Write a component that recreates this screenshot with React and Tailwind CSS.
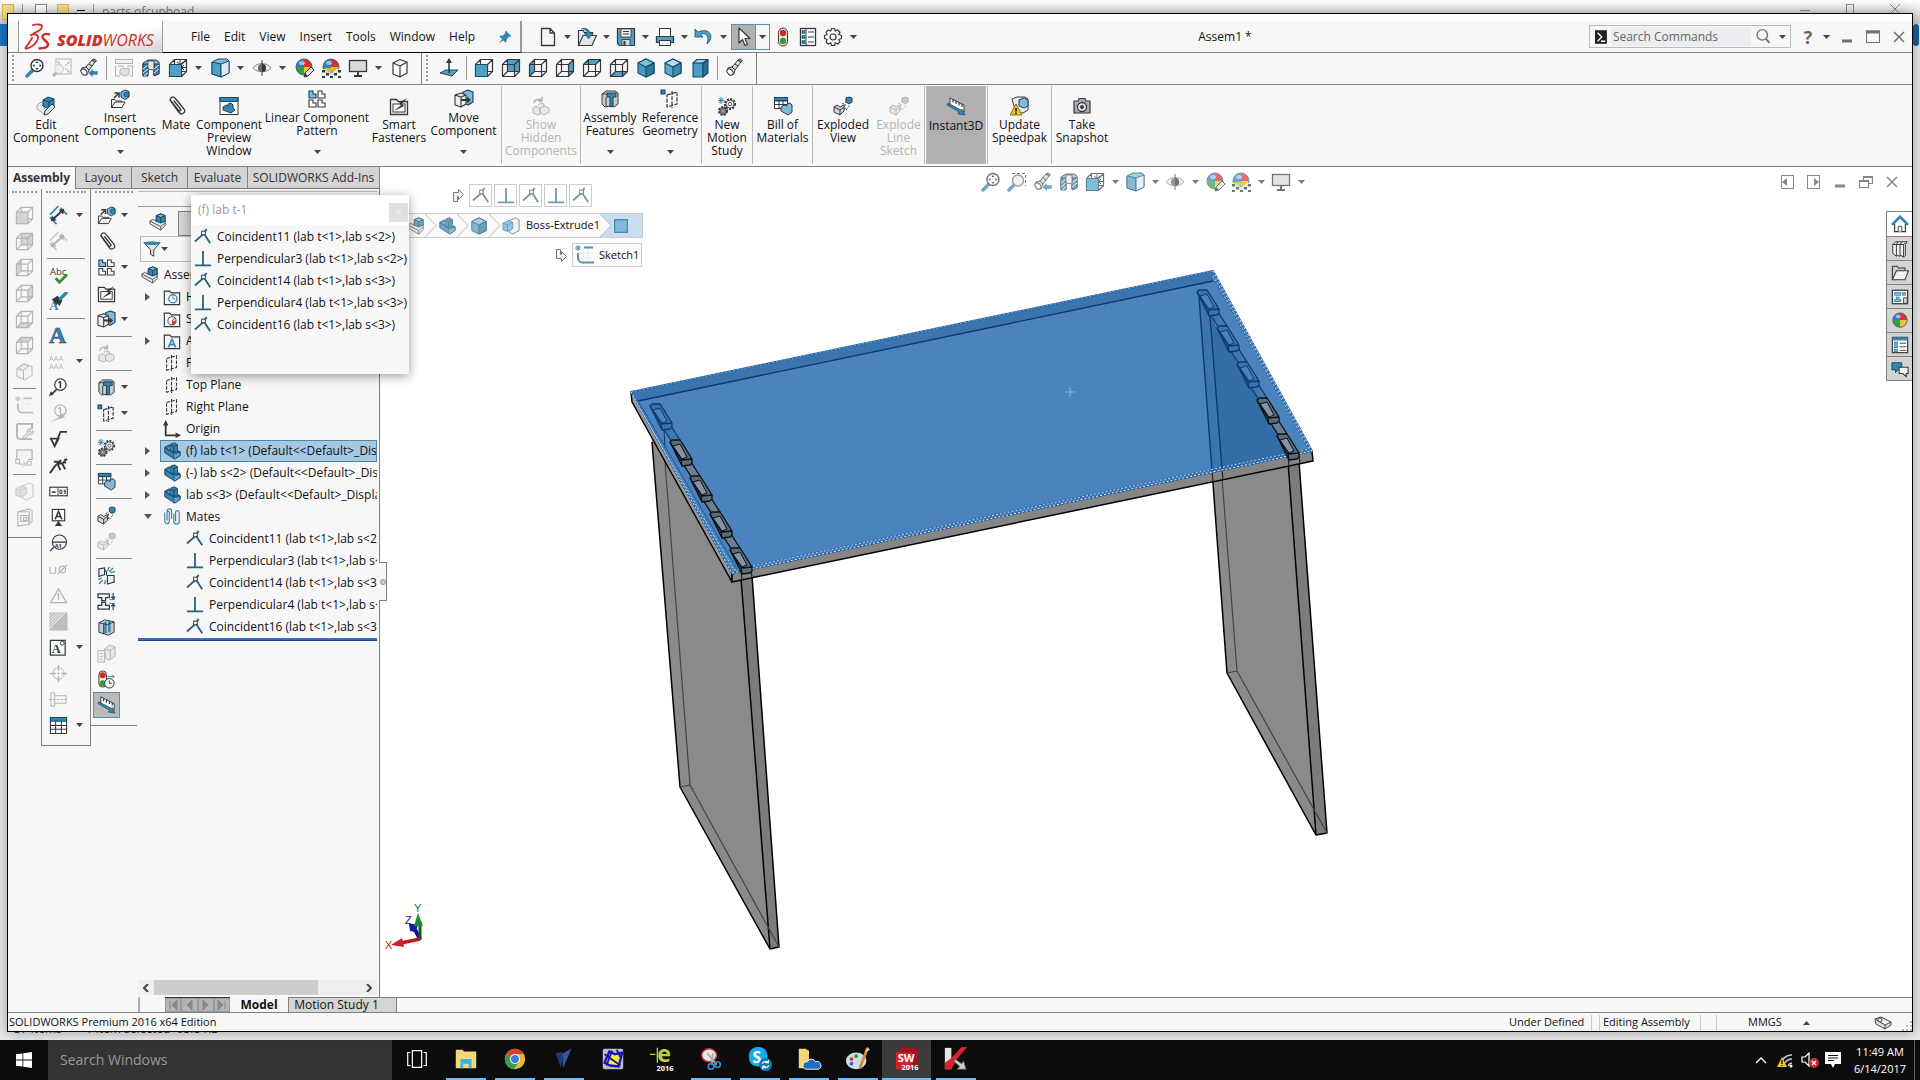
import React from "react";

const K = "#34383c";
const B = "#3585af";
const L = "#7fbcdc";
const F = "#4f9fc6";

const ball = (
  <>
    <path d="M10 9V1A8 8 0 0 0 2 9Z" fill="#3b76d6" />
    <path d="M10 9V1A8 8 0 0 1 18 9Z" fill="#d8302a" />
    <path d="M10 9V17A8 8 0 0 1 2 9Z" fill="#2fa33c" />
    <path d="M10 9V17A8 8 0 0 0 18 9Z" fill="#e8c33a" />
    <circle cx="10" cy="9" r="8" fill="none" stroke="#55606a" strokeWidth="1" />
    <ellipse cx="8" cy="5" rx="3" ry="2" fill="#fff" opacity="0.5" />
  </>
);

const wire = <path d="M1.500 6.500H13.500V18.500H1.500ZM6.500 1.500H18.500V13.500H6.500ZM1.500 6.500L6.500 1.500M13.500 6.500L18.500 1.500M1.500 18.500L6.500 13.500M13.500 18.500L18.500 13.500" fill="none" stroke={K} strokeWidth="1.200" />;
const partBlue = (
  <g stroke="#12405a" strokeWidth="1" strokeLinejoin="round">
    <path d="M2 6L7 3L9 4V2L13 1L16 3V9L19 11V15L13 19L2 12Z" fill={B} />
    <path d="M2 6L7 9L12 12V18L13 19L19 15V11L14 13L8 9V5Z" fill={L} opacity="0.600" />
    <path d="M9 4L12 5L16 3M12 5V11L19 11M2 6L12 12.500" fill="none" />
  </g>
);
const asm = (
  <g strokeLinejoin="round" strokeWidth="1.100">
    <path d="M1 9L4 7L8 9V6L14 10L18 8V14L13 19L1 12Z" fill="#e4e6e8" stroke="#55595d" />
    <path d="M1 9L13 15V19M13 15L18 11" fill="none" stroke="#55595d" />
    <path d="M8 3L13 1L18 3V9L13 11L8 9Z" fill={B} stroke="#12405a" />
    <path d="M8 3L13 5L18 3L13 1Z" fill={L} stroke="#12405a" />
    <path d="M13 5V11" stroke="#12405a" />
  </g>
);
const planeShape = <path d="M4 5L15 2V15L4 18ZM9.500 1V19" fill="none" stroke={K} strokeWidth="1.200" strokeDasharray="4 1.500" />;
const folder = <path d="M1.500 18.500V3.500H7.500L9.500 5.500H18.500V18.500Z" fill="#f3f3f3" stroke={K} strokeWidth="1.300" />;
const gear = (x, y, r, f) => (
  <g>
    <circle cx={x} cy={y} r={r} fill={f} stroke={K} strokeWidth="2" strokeDasharray="2 1.300" />
    <circle cx={x} cy={y} r={r - 1} fill={f} stroke={K} strokeWidth="0.800" />
    <circle cx={x} cy={y} r={r / 3} fill="#fff" stroke={K} strokeWidth="0.800" />
  </g>
);
const cubeSolid = (a, b, c) => (
  <g stroke="#174a66" strokeWidth="1.100" strokeLinejoin="round">
    <path d="M10 1L18 5V15L10 19L2 15V5Z" fill={a} />
    <path d="M10 1L18 5L10 9L2 5Z" fill={b} />
    <path d="M10 9L18 5V15L10 19Z" fill={c} />
  </g>
);
const boxSolid = (a, b, c) => (
  <g stroke="#174a66" strokeWidth="1.100" strokeLinejoin="round">
    <path d="M3 5H13V19H3Z" fill={a} />
    <path d="M3 5L7 1.500H18L13 5Z" fill={b} />
    <path d="M13 5L18 1.500V15L13 19Z" fill={c} />
  </g>
);
const flash = (
  <g stroke={K} strokeWidth="1" strokeLinejoin="round">
    <path d="M2 13L5 17L9 16L10 12L16 4L13 2L7 9L3 10Z" fill="#d6d8da" />
    <path d="M13 2L15 0.800L17.500 2.800L16 4Z" fill="#9ea2a6" />
    <ellipse cx="5" cy="14" rx="3.600" ry="2.500" transform="rotate(50 5 14)" fill="#fff" />
    <path d="M7 9L10 12M10 6L13 8" fill="none" />
  </g>
);
const check = (
  <g fill={K}>
    {[[1, 12], [9, 12], [5, 15], [13, 15], [1, 18], [9, 18], [17, 12], [17, 18]].map(([x, y], i) => (
      <rect key={i} x={x} y={y} width="3" height="2.500" />
    ))}
  </g>
);
const ruler = (
  <>
    <path d="M4 1L18 8V15L4 8Z" fill="#fff" stroke={K} strokeWidth="1" />
    <path d="M7 2.500V5.500M10 4V7M13 5.500V8.500M16 7V10" stroke={K} strokeWidth="1.200" />
    <path d="M1 8L13 15L12 17L19 18L16 12L15 13L2 6Z" fill={B} stroke="#12405a" strokeWidth="0.600" />
  </>
);
const move = (
  <g strokeWidth="1.100" strokeLinejoin="round">
    <path d="M9 3L14 1L19 3V13L14 16L9 14Z" fill={L} stroke="#12405a" />
    <path d="M1 6L7 4L12 6V15L7 18L1 16Z" fill="#ececec" stroke={K} />
    <path d="M1 6L7 8L12 6M7 8V18" fill="none" stroke={K} />
    <path d="M7 10H13V7.500L17 11L13 14.500V12H7Z" fill={K} stroke="none" />
  </g>
);
const exploded = (
  <g strokeLinejoin="round">
    <path d="M1 11L4 9L7 11L11 9V15L7 19L1 16Z" fill="#d2d4d6" stroke={K} />
    <path d="M1 11L7 14V19M7 14L11 11" fill="none" stroke={K} />
    <path d="M13 2L16 1L19 2V6L16 8L13 6Z" fill={B} stroke="#12405a" />
    <path d="M12 8V14M9 8L13 6M13 14L17 9" fill="none" stroke={K} strokeDasharray="2 1.500" />
  </g>
);
const feat = (
  <g strokeLinejoin="round">
    <path d="M2 5L6 2H15L18 4V15L14 18L10 17L5 18L2 15Z" fill="#c9cccf" stroke={K} />
    <path d="M7 4H16V8H13V17L10 18V8H7Z" fill={B} stroke="#12405a" />
    <path d="M2 5H7M6 8V17" stroke={K} fill="none" />
  </g>
);
const refgeo = (
  <>
    <rect x="1" y="1" width="4" height="4" fill={B} stroke="#12405a" />
    <path d="M7 6L17 3V15L7 18ZM12 2V19" fill="none" stroke={K} strokeWidth="1.200" strokeDasharray="4 1.300" />
  </>
);
const mating = (
  <path d="M4 4L13 16.500A3 3 0 0 0 18 13L9 2A2.500 2.500 0 0 0 5 5L12.500 14.500A1 1 0 0 0 14.500 13L8 5" fill="none" stroke={K} strokeWidth="1.300" strokeLinecap="round" />
);
const mini = (x, y, f, s) => <path key={x + "-" + y} d={`M${x} ${y}h4v3h3v4h-7z`} fill={f} stroke={s} strokeWidth="1.100" />;
const cutaway = (
  <g strokeLinejoin="round">
    <path d="M2 5L7 2H15L18 4V15L13 17V8L7 8V17L2 18Z" fill={L} stroke={K} />
    <path d="M2 6H7V18H2ZM13 6H18V16L13 18Z" fill={B} stroke={K} />
    <path d="M2 11L7 7M2 15L7 11M3 18L7 15M13 11L18 7M13 15L18 11" stroke="#fff" strokeWidth="0.900" />
    <path d="M7 3H13V12L7 11Z" fill="#e8ecef" stroke={K} strokeWidth="0.800" />
  </g>
);
const traffic = (
  <>
    <rect x="5.500" y="1" width="9" height="18" rx="4.500" fill="#e9e9e9" stroke={K} />
    <circle cx="10" cy="6" r="3.200" fill="#d02b1e" />
    <circle cx="10" cy="14" r="3.200" fill="#3d9a2a" />
  </>
);

const ICONS = {
  zoomFit: (
    <>
      <path d="M2 18L8 12" stroke={B} strokeWidth="3.500" strokeLinecap="round" />
      <circle cx="12" cy="7.500" r="6" fill="#f4f7f9" stroke={K} strokeWidth="1.400" />
      <path d="M12 3L13.500 5H10.500ZM12 12L13.500 10H10.500ZM7.500 7.500L9.500 6V9ZM16.500 7.500L14.500 6V9Z" fill={K} />
    </>
  ),
  zoomArea: (
    <>
      <path d="M2 18L7 13" stroke={B} strokeWidth="3.500" strokeLinecap="round" />
      <path d="M5 1.500H18.500V14" fill="none" stroke={K} strokeDasharray="3 2" />
      <circle cx="11" cy="8.500" r="5.500" fill="#e9eef2" stroke="#777" strokeWidth="1.400" />
    </>
  ),
  zoomGrey: (
    <>
      <rect x="4" y="1" width="15" height="15" fill="none" stroke={K} />
      <path d="M8 5H6V3M15 5H17V3M15 13H17V15M10 8L6 4M13 8L17 4M13 10L17 14" stroke={K} fill="none" />
      <circle cx="7" cy="11" r="4.500" fill="#ddd" stroke="#777" />
      <path d="M1 18L4 15" stroke={K} strokeWidth="3" />
    </>
  ),
  prev: (
    <>
      {flash}
      <path d="M19 13H14V10.500L9 15L14 19.500V17H19Z" fill={B} stroke="#fff" strokeWidth="0.500" />
    </>
  ),
  flash,
  annot: (
    <g stroke={K} fill="#eee">
      <rect x="1.500" y="1.500" width="17" height="4" />
      <path d="M1.500 8V18H6M13 8H18.500V18H15M4 8H10" fill="none" />
      <path d="M6 12L9 10L12 11L15 10V16L11 18L6 16Z" fill="#bbb" />
    </g>
  ),
  cutaway,
  orient: (
    <>
      {wire}
      <rect x="1.500" y="6.500" width="12" height="12" fill={F} stroke="#174a66" />
      <path d="M12 1.500V6M9 4L12 6.500L15 4M18.500 9.500H14M16 7L13.500 9.500L16 12" fill="none" stroke={K} />
    </>
  ),
  display: (
    <g stroke="#174a66" strokeLinejoin="round">
      <path d="M2 4L8 1H17L19 3V15L11 19L2 16Z" fill={L} />
      <path d="M2 4L11 6V19L2 16Z" fill={F} />
      <path d="M11 6L19 3V15L11 19Z" fill="#d9ecf6" />
    </g>
  ),
  eye: (
    <>
      <path d="M1 10C5 4 15 4 19 10C15 15 5 15 1 10Z" fill="#ececec" stroke="#888" />
      <path d="M10 2V18" stroke={K} />
      <circle cx="10" cy="10" r="4" fill="#666a6e" />
      <path d="M10 6A4 4 0 0 1 10 14Z" fill={K} />
    </>
  ),
  ballEdit: (
    <>
      {ball}
      <path d="M10 19L11 15L17 9L20 12L14 18Z" fill="#cfe6f3" stroke={K} />
      <path d="M10 19L11 15L14 18Z" fill={K} />
    </>
  ),
  scene: (
    <>
      {ball}
      <path d="M1 11V19H19V11" fill="#fff" opacity="0.700" />
      {check}
      <path d="M4 10a6.500 6.500 0 0 0 12 0z" fill="#d9b33c" />
    </>
  ),
  ball,
  monitor: (
    <>
      <rect x="1.500" y="2.500" width="17" height="11" fill="#d8dadc" stroke={K} strokeWidth="1.300" />
      <path d="M10 14V17M6 18H14" stroke={K} strokeWidth="2" />
    </>
  ),
  cubeLine: <path d="M3 5L10 1.500L17 4V15L10 19L3 16ZM3 5L10 8L17 4M10 8V19" fill="#fff" stroke={K} strokeWidth="1.200" strokeLinejoin="round" />,
  normal: (
    <>
      <path d="M1 15L7 12H19L13 18Z" fill={F} stroke="#174a66" />
      <path d="M10 15V3" stroke={K} strokeWidth="1.600" />
      <path d="M10 0L13 5H7Z" fill={K} />
    </>
  ),
  cFront: <>{wire}<rect x="1.500" y="6.500" width="12" height="12" fill={F} stroke="#174a66" /></>,
  cBack: <><rect x="6.500" y="1.500" width="12" height="12" fill={F} />{wire}</>,
  cLeft: <><path d="M1.500 6.500L6.500 1.500V13.500L1.500 18.500Z" fill={F} />{wire}</>,
  cRight: <><path d="M13.500 6.500L18.500 1.500V13.500L13.500 18.500Z" fill={F} />{wire}</>,
  cTop: <><path d="M1.500 6.500L6.500 1.500H18.500L13.500 6.500Z" fill={F} />{wire}</>,
  cBottom: <><path d="M1.500 18.500L6.500 13.500H18.500L13.500 18.500Z" fill={F} />{wire}</>,
  iso: cubeSolid("#4a9cc4", "#7fc0e0", "#2a7aa3"),
  tri: cubeSolid("#5fa9cc", "#b5dced", "#3d8db5"),
  dim: boxSolid("#4a9cc4", "#9fd0e8", "#2a6f96"),
  editComp: (
    <>
      <path d="M1 9L5 6L8 8V12L12 15L8 18L1 13Z" fill="#e8e8e8" stroke="#a8a8a8" />
      <path d="M7 4L12 1L18 3V10L13 13L7 10Z" fill={B} stroke="#12405a" />
      <path d="M7 4L13 6L18 3M13 6V13" stroke="#12405a" fill="none" />
      <path d="M8 19L9 15L16 8L19 11L12 18Z" fill="#cfe6f3" stroke={K} />
    </>
  ),
  insert: (
    <>
      <path d="M1.500 18.500V10.500H5L6.500 12H12V13" fill="#eee" stroke={K} />
      <path d="M1.500 18.500L5 13H15L12 18.500Z" fill="#f2f2f2" stroke={K} />
      <path d="M4 9L8 5M4.500 4H9V8.500" stroke={K} strokeWidth="1.600" fill="none" />
      <path d="M11 3L15 1L19 2.500V8L15 10.500L11 8Z" fill={L} stroke="#12405a" />
      <path d="M14 4L17 3L19 4V7L16 8L14 7Z" fill={B} stroke="#12405a" strokeWidth="0.700" />
    </>
  ),
  mate: mating,
  preview: (
    <>
      <rect x="1" y="1.500" width="18" height="17" fill="#fff" stroke={K} />
      <rect x="1" y="1.500" width="18" height="4" fill={B} stroke="#174a66" />
      <path d="M4 11L7 9L9 10V8L12 7L14 9V12L16 14L12 17L4 14Z" fill={B} stroke="#12405a" />
    </>
  ),
  pattern: <>{[mini(2, 2, L, "#12405a"), mini(11, 2, "#fff", K), mini(2, 11, "#fff", K), mini(11, 11, "#fff", K)]}</>,
  smart: (
    <>
      {folder}
      <rect x="4" y="8" width="12" height="8" fill="#fff" stroke={K} />
      <path d="M18 2L10 7L12 9L5 15L15 10L13 8Z" fill={K} />
    </>
  ),
  move,
  hidden: (
    <>
      <path d="M7 9L10 7L13 8V11M2 12L5 10L9 12V18L7 19L2 17ZM9 12L13 10L18 12V16L13 19L9 17Z" fill="#ccc" stroke={K} />
      <path d="M3 7A5 4 0 0 1 11 4M11 1V5H7" fill="none" stroke={K} strokeWidth="1.500" />
    </>
  ),
  feat,
  refgeo,
  motion: (
    <>
      {gear(13, 8, 5, "#eee")}
      {gear(6, 15, 4, "#aaa")}
      <path d="M4 1V8M1 4.500H7.500M2 2L6.500 7M6.500 2L2 7" stroke={B} strokeWidth="1" />
    </>
  ),
  bom: (
    <>
      <path d="M1.500 1.500H14.500V12.500H1.500ZM1.500 5H14.500M1.500 8.500H14.500M6 1.500V12.500M10 1.500V12.500" fill="#fff" stroke={K} />
      <rect x="1.500" y="1.500" width="13" height="3" fill={B} stroke="#174a66" />
      <path d="M8 11L11 9L14 10V8L17 7L19 9V16L15 19L8 15Z" fill={L} stroke={K} />
    </>
  ),
  exploded,
  instant: ruler,
  speedpak: (
    <>
      <path d="M2 3L7 1H15L18 3V14L13 17H6Z" fill="#e8ecef" stroke={K} />
      <path d="M9 4L14 2L18 4V10L14 12L9 10Z" fill={L} stroke="#12405a" />
      <path d="M6 8L12 19H0Z" fill="#f3c52c" stroke="#8d6c10" />
      <path d="M6 12V15.500M6 16.500V18" stroke="#000" strokeWidth="1.500" />
    </>
  ),
  camera: (
    <>
      <path d="M2 5H6L7 2.500H13L14 5H18V17H2Z" fill="#a9adb1" stroke={K} strokeWidth="1.200" />
      <circle cx="10" cy="11" r="4.500" fill="#e9e9e9" stroke={K} strokeWidth="1.300" />
      <circle cx="10" cy="11" r="2" fill={K} />
    </>
  ),
  newDoc: <path d="M3.500 1.500H12L16.500 6V18.500H3.500ZM12 1.500V6H16.500" fill="#f6f6f6" stroke={K} strokeWidth="1.300" strokeLinejoin="round" />,
  open: (
    <>
      <path d="M1.500 18.500V3.500H6L7.500 5.500H15.500V8" fill="#f0f0f0" stroke={K} strokeWidth="1.200" />
      <path d="M1.500 18.500L6 8.500H19.500L15 18.500Z" fill="#e6e6e6" stroke={K} strokeWidth="1.200" />
      <path d="M4 2C9 0 13 3 13 6H16L11.500 12L7 6H10C10 4 8 2 4 2Z" fill={B} stroke="#174a66" strokeWidth="0.500" />
    </>
  ),
  save: (
    <>
      <path d="M1.500 1.500H18.500V18.500H3.500L1.500 16.500Z" fill={F} stroke={K} strokeWidth="1.200" />
      <rect x="5" y="2" width="10" height="8" fill="#f5f5f5" stroke={K} strokeWidth="0.800" />
      <path d="M7 4.500H13M7 7H13" stroke={K} />
      <rect x="6" y="12.500" width="8" height="6" fill="#d8d8d8" stroke={K} strokeWidth="0.800" />
      <rect x="7.500" y="14" width="2" height="4" fill={K} />
    </>
  ),
  print: (
    <>
      <rect x="4.500" y="1.500" width="11" height="8" fill="#fff" stroke={K} />
      <path d="M1.500 9.500H18.500V15.500H1.500Z" fill={F} stroke={K} strokeWidth="1.200" />
      <rect x="4.500" y="13.500" width="11" height="5" fill="#f1f1f1" stroke={K} />
    </>
  ),
  undo: <path d="M1 2V10H9L6.500 7.500C11 5 16 8 13 17C21 10 16 0 4 5Z" fill={F} stroke="#174a66" strokeWidth="0.800" strokeLinejoin="round" />,
  cursor: <path d="M5 1V16L8.500 12.500L11 18.500L13.500 17.500L11 11.500H16Z" fill="#fff" stroke={K} strokeWidth="1.200" strokeLinejoin="round" />,
  traffic,
  list: (
    <>
      <rect x="2.500" y="1.500" width="15" height="17" fill="#fff" stroke={K} strokeWidth="1.300" />
      <path d="M8 1.500V18.500M10 5H16M10 10H16M10 15H16" stroke={K} />
      <path d="M4 3.500H7V6.500H4ZM4 8.500H7V11.500H4ZM4 13.500H7V16.500H4Z" fill={B} stroke="#174a66" strokeWidth="0.600" />
    </>
  ),
  gear: (
    <>
      <path d="M8.500 1.500H11.500L12.200 4L14.500 2.800L17 5.200L15.800 7.500L18.500 8.500V11.500L15.800 12.500L17 14.800L14.800 17L12.200 15.800L11.500 18.500H8.500L7.800 15.800L5.200 17L3 14.800L4.200 12.500L1.500 11.500V8.500L4.200 7.500L3 5.200L5.200 3L7.800 4Z" fill="#f7f7f7" stroke={K} strokeWidth="1.200" strokeLinejoin="round" />
      <circle cx="10" cy="10" r="3" fill="none" stroke={K} strokeWidth="1.200" />
    </>
  ),
  pin: (
    <g fill={B}>
      <path d="M11 2L18 9L16 10L15 9.500L12 13L12 16L10.500 17L3 9.500L4.500 8L7.500 8L10.500 5L10 4Z" />
      <path d="M7 12L2 18L8 14Z" />
    </g>
  ),
  coincident: (
    <g fill="none" stroke="#24627f" strokeWidth="2">
      <path d="M1 15L10 7L14 1" />
      <path d="M11 6L18 17" />
      <rect x="8.500" y="3.500" width="4" height="4" fill="#fff" stroke={K} strokeWidth="1.100" />
    </g>
  ),
  perp: <path d="M10 1V17M1 17H19" stroke="#24627f" strokeWidth="2" fill="none" />,
  sketch: (
    <>
      <path d="M8 2V18M13 2V18M3 8H18M3 13H18" stroke="#ddd" />
      <path d="M9 2.500H18M3 8V13A4.500 4.500 0 0 0 8 17.500H19" fill="none" stroke="#24627f" strokeWidth="2" />
      <path d="M3 0V6M0 3H6M1 1L5 5M5 1L1 5" stroke="#24627f" />
    </>
  ),
  extrude: (
    <g strokeLinejoin="round">
      <path d="M8 4L15 1L19 3V15L12 19L8 17Z" fill="#f0f0f0" stroke="#666" />
      <path d="M1 7L7 4L12 6V13L6 16L1 14Z" fill={L} stroke={B} />
      <path d="M1 7L6 9L12 6M6 9V16" fill="none" stroke={B} />
    </g>
  ),
  face: <rect x="3" y="3" width="14" height="14" fill={L} stroke={B} strokeWidth="1.300" />,
  part: partBlue,
  asm,
  plane: planeShape,
  origin: (
    <>
      <path d="M3 5V17H15" fill="none" stroke={K} strokeWidth="2" />
      <path d="M3 0L6 6H0ZM20 17L14 14V20Z" fill={K} />
    </>
  ),
  history: <>{folder}<circle cx="11" cy="12" r="4.500" fill="#fff" stroke={B} strokeWidth="1.400" /><path d="M11 9V12H13.500M5 12L7 14" stroke={B} fill="none" /></>,
  sensor: <>{folder}<circle cx="10" cy="12" r="4.500" fill="#fff" stroke={K} /><path d="M10 12L13 9" stroke={K} /><path d="M10 12H14.500A4.500 4.500 0 0 1 10 16.500Z" fill="#d33" /></>,
  annoFolder: <>{folder}<path d="M6 17L10 8L14 17M7.500 14H12.500" fill="none" stroke={B} strokeWidth="1.800" /></>,
  mates: <path d="M2 5V15A2 2 0 0 0 7 15V4A1.500 1.500 0 0 0 4.500 4V14M12 6V15A3 3 0 0 0 18 15V5A2 2 0 0 0 14 5V15M9.500 12V4A2.500 2.500 0 0 0 4.500 3" fill="none" stroke={B} strokeWidth="1.300" />,
  filter: <><path d="M1 3H19L12 11V18L8.500 16V11Z" fill="#e6e6e6" stroke={K} strokeWidth="1.100" /><ellipse cx="10" cy="3.500" rx="9" ry="2" fill={B} /></>,
  dimension: (
    <>
      <path d="M1 9L10 0M8 19L1 12M12 2L19 9" stroke={B} strokeWidth="1.800" />
      <path d="M4 14L14 5" stroke={K} strokeWidth="2" />
      <path d="M2 16L3 10L8 15ZM16 3L15 9L10 4Z" fill={K} />
    </>
  ),
  spell: (
    <>
      <text x="1" y="9" fontSize="10" fontFamily="Open Sans" fill={K}>Abc</text>
      <path d="M7 13L11 17L19 9" fill="none" stroke="#3a8f2a" strokeWidth="3" />
    </>
  ),
  brush: (
    <>
      <text x="0" y="19" fontSize="14" fontWeight="bold" fontFamily="Liberation Serif" fill={B}>A</text>
      <path d="M3 8L9 4L14 9L11 15L9 12L8 14Z" fill={K} />
      <path d="M12 7L18 1" stroke={B} strokeWidth="3.500" strokeLinecap="round" />
    </>
  ),
  bigA: <text x="0" y="18" fontSize="25" fontWeight="bold" fontFamily="Liberation Serif" fill={B} stroke="#174a66" strokeWidth="0.600">A</text>,
  sixA: (
    <>
      <text x="0" y="9" fontSize="8" fontFamily="Open Sans" fill={K}>AAA</text>
      <text x="0" y="18" fontSize="8" fontFamily="Open Sans" fill={K}>AAA</text>
    </>
  ),
  balloon: (
    <>
      <circle cx="12" cy="7" r="6" fill="#fff" stroke={K} strokeWidth="1.300" />
      <path d="M12 3.500V10.500M10 5L12 3.500M8 12L2 18" stroke={K} strokeWidth="1.600" fill="none" />
      <path d="M0 19L2 14L5 17Z" fill={K} />
    </>
  ),
  balloonAuto: (
    <>
      <circle cx="12" cy="7" r="6" fill="#fff" stroke={K} strokeWidth="1.300" />
      <path d="M12 3.500V10.500M10 5L12 3.500" stroke={K} strokeWidth="1.600" fill="none" />
      <path d="M18 9L9 12L11 14L1 19L17 14L14 12Z" fill={K} />
    </>
  ),
  finish: <path d="M2 9H10L6 17ZM6 17L12 2H19" fill="none" stroke={K} strokeWidth="1.900" />,
  weld: <path d="M1 18L6 11L9 8L14 8L19 3M6 11L9 8L12 15M14 8L17 14M5 6H11M12 4V8M17 3V8" fill="none" stroke={K} strokeWidth="2" />,
  tol: (
    <>
      <rect x="0.800" y="5.500" width="18.400" height="9" fill="#fff" stroke={K} strokeWidth="1.200" />
      <path d="M9.500 5.500V14.500M3 11A2.500 2.500 0 0 1 7 11ZM11.500 8.500H13.500V12H11.500ZM15.500 8.500H17V12H15.500M15.500 10H17" fill="none" stroke={K} />
    </>
  ),
  datum: (
    <>
      <rect x="3.500" y="1.500" width="13" height="12" fill="#fff" stroke={K} strokeWidth="1.200" />
      <path d="M6.500 12L10 3.500L13.500 12M8 9H12M10 13V17" fill="none" stroke={K} strokeWidth="1.600" />
      <path d="M10 14L14 19H6Z" fill={K} />
    </>
  ),
  target: (
    <>
      <circle cx="11" cy="8.500" r="7.500" fill="#f2f2f2" stroke={K} strokeWidth="1.200" />
      <path d="M3.500 8.500H18.500M5 14L1 18" stroke={K} strokeWidth="1.300" />
      <text x="6" y="15" fontSize="6" fontWeight="bold" fontFamily="Open Sans" fill={K}>A1</text>
    </>
  ),
  hole: <path d="M1 7V14H7V7M19 5L9 15M17.500 10A3.500 3.500 0 1 1 10.500 10A3.500 3.500 0 1 1 17.500 10" fill="none" stroke={K} strokeWidth="1.200" />,
  warn: <path d="M10 3L18.500 17.500H1.500ZM10 8V15M8.500 9.500L10 8" fill="none" stroke={K} strokeWidth="1.300" />,
  hatch: <><rect x="0.500" y="0.500" width="19" height="19" fill="#555" /><path d="M1 8L8 1M1 14L14 1M1 4L4 1M1 11L11 1M1 17L17 1" stroke="#fff" /></>,
  block: (
    <>
      <rect x="1.500" y="2.500" width="15.500" height="15.500" fill="#fff" stroke={K} strokeWidth="1.300" />
      <text x="3" y="16" fontSize="13" fontWeight="bold" fontFamily="Liberation Serif" fill={K}>A</text>
      <circle cx="14" cy="5.500" r="2" fill="#fff" stroke={K} />
    </>
  ),
  center: <><circle cx="10" cy="10" r="6" fill="none" stroke={K} /><path d="M10 1V7M10 9V11M10 13V19M1 10H7M9 10H11M13 10H19" stroke={K} strokeWidth="1.500" /></>,
  cline: <><path d="M2 3H6V17H2ZM6 6H18V14H6" fill="none" stroke={K} /><path d="M0 10H20" stroke={K} strokeDasharray="3 1" /></>,
  table: <><path d="M1.500 1.500H18.500V18.500H1.500ZM1.500 10H18.500M1.500 14H18.500M7 5V18.500M13 5V18.500" fill="#fff" stroke={K} strokeWidth="1.100" /><rect x="1.500" y="1.500" width="17" height="4" fill={B} stroke="#174a66" /></>,
  interf: (
    <>
      <path d="M2 3L8 2V9L2 11ZM11 10H18V17L11 19ZM8 4L10 6V10" fill="#eee" stroke={K} strokeWidth="1.200" />
      <path d="M11 5L13 1M13 6L17 2M14 7L19 6M1 14L5 13M2 19L6 15M8 19L9 15" stroke={B} strokeWidth="1.400" />
    </>
  ),
  clear: (
    <>
      <path d="M1 2H13V6H9V9H5V6H1ZM1 18V14H5V11H9V14H13V18Z" fill="#f4f4f4" stroke={K} strokeWidth="1.300" />
      <path d="M13 8H19M13 12H19" stroke={B} />
      <path d="M17 1V7M17 13V19M15 5L17 7L19 5M15 15L17 13L19 15" stroke={K} fill="none" strokeWidth="1.200" />
    </>
  ),
  align: (
    <>
      <path d="M2 5L8 2L18 4V15L12 18L2 15Z" fill="#c8cbce" stroke={K} />
      <path d="M9 4V16M13 3V15" stroke={B} strokeWidth="2.500" />
      <path d="M2 5L11 7L18 4M7 6V17" stroke={K} fill="none" />
    </>
  ),
  visual: (
    <>
      <path d="M1 7H8V19H1ZM3 10H6M3 13H6M3 16H6" fill="#eee" stroke={K} />
      <path d="M8 5L13 1L19 3V13L13 17L9 15Z" fill="#ccc" stroke={K} />
      <path d="M8 5L14 7L19 3M14 7V17" fill="none" stroke={K} />
    </>
  ),
  perf: (
    <>
      <rect x="2" y="1" width="8" height="17" rx="4" fill="#eee" stroke={K} />
      <circle cx="6" cy="5.500" r="3.200" fill="#d02b1e" />
      <circle cx="6" cy="14" r="3.200" fill="#3d9a2a" />
      <circle cx="13" cy="14" r="5" fill="#f2f2f2" stroke={K} />
      <path d="M13 11V14H15.500" stroke={K} fill="none" />
      <path d="M11 7H18M16 5L18 7L16 9" stroke={B} fill="none" />
    </>
  ),
  wrench: <><path d="M2 2H18V7M2 2V14A4 4 0 0 0 6 18H18" fill="none" stroke={K} strokeWidth="2" /><path d="M8 16L13 11A3 3 0 0 1 17 7L15 10L17 11L19 9A3 3 0 0 1 15 13L10 18Z" fill="#bbb" stroke={K} /></>,
  swap: <><path d="M2 14V2H18V12H14" fill="#eee" stroke={K} strokeWidth="1.300" /><rect x="0.800" y="12" width="4" height="4" fill="#fff" stroke={K} /><rect x="13" y="14" width="4" height="4" fill="#fff" stroke={K} /><path d="M4 17H11M8.500 14L12 17L8.500 20" fill="none" stroke={K} /></>,
  shellBox: <path d="M3 4L15 1L18 3V14L15 17L3 19ZM6 8H14V14H6ZM9 10H12V13H9ZM3 4L15 4V17" fill="#f0f0f0" stroke={K} strokeWidth="1.100" />,
  chamfer: <><path d="M2 7L9 2L18 5V14L10 19L2 15Z" fill="#eee" stroke={K} /><path d="M2 7L9 2L15 4L9 9Z" fill="#ccc" stroke={K} /><path d="M9 9V18" stroke={K} /></>,
  home: <><path d="M4 10V18.500H16V10" fill="#fff" stroke={K} strokeWidth="1.300" /><path d="M1 11L10 2L19 11" fill="none" stroke={B} strokeWidth="3" /><path d="M8 18.500V12.500H12V18.500" fill="#eee" stroke={K} /></>,
  books: <path d="M2 5L5 2H18L16 5V17L14 19L11 17L10 18L7 17L6 18L2 15ZM6 5V18M10 5V18M2 5H6L8 2M10 5L12 2M6 5H14L16 3M14 5V19" fill="#f2f2f2" stroke={K} strokeWidth="1.100" />,
  folderOpen: <><path d="M1.500 17.500V2.500H7L8 4.500H15.500V7" fill="#ccc" stroke={K} strokeWidth="1.200" /><path d="M1.500 17.500L6 7.500H19.500L15.500 17.500Z" fill="#f2f2f2" stroke={K} strokeWidth="1.200" /></>,
  palette: <><rect x="1.500" y="2.500" width="17" height="15" fill="#fff" stroke={K} strokeWidth="1.400" /><path d="M4 5H11V8H4ZM13 5H16V8H13ZM6 10H9V13H11V15H4V13H6Z" fill={L} stroke={B} /><path d="M14 11H18V17H14Z" fill="#ddd" stroke={K} /></>,
  props: <><rect x="1.500" y="1.500" width="17" height="17" fill="#fff" stroke={K} strokeWidth="1.300" /><rect x="1.500" y="1.500" width="17" height="3.500" fill={B} /><path d="M9.500 8H17M9.500 12H17M9.500 16H17" stroke={K} /><path d="M4 7H7V9H4ZM4 11H7V13H4ZM4 15H7V17H4Z" fill="#fff" stroke={B} strokeWidth="1.300" /></>,
  forum: <><path d="M1 3H12V11H8L5 14V11H1Z" fill={B} stroke="#174a66" /><path d="M9 8H19V15H17V18.500L13 15H9Z" fill="#f6f6f6" stroke={K} strokeWidth="1.200" /></>,
  paneL: <><rect x="3.500" y="3.500" width="12" height="13" fill="none" stroke={K} /><path d="M9 6V14L4 10Z" fill={K} /></>,
  paneR: <><rect x="3.500" y="3.500" width="12" height="13" fill="none" stroke={K} /><path d="M10 6V14L15 10Z" fill={K} /></>,
  min: <path d="M5 14H15" stroke={K} strokeWidth="3" />,
  max: <><rect x="3.500" y="4" width="13" height="11.500" fill="none" stroke={K} /><path d="M3 5H17" stroke={K} strokeWidth="3" /></>,
  restore: <path d="M7.500 8V4.500H16.500V11.500H12.500M3.500 8.500H12.500V15.500H3.500ZM3.500 9.500H12.500M7.500 5.500H16.500" fill="none" stroke={K} strokeWidth="1.200" />,
  close: <path d="M5 5L15 15M15 5L5 15" stroke={K} strokeWidth="1.500" />,
};

function Ic({ n, className = "size-5" }) {
  return (
    <svg viewBox="0 0 20 20" className={"shrink-0 " + className} aria-hidden="true">
      {ICONS[n]}
    </svg>
  );
}

function Caret({ className = "" }) {
  return (
    <svg viewBox="0 0 7 4" className={"h-1 w-[7px] shrink-0 " + className} aria-hidden="true">
      <path d="M0 0H7L3.500 4Z" fill="#444" />
    </svg>
  );
}

const DIM = "opacity-35 grayscale";

function ToolRow({ items, cell, caret }) {
  return items.map((t, i) => {
    if (t === "^") return <button key={i} aria-label="More options" className={"flex h-6 shrink-0 items-center justify-center " + caret}><Caret /></button>;
    if (t === "|") return <span key={i} className="flex h-6 w-2 shrink-0 justify-center"><span className="w-px bg-[#999]" /></span>;
    const dim = t.startsWith("-");
    const n = dim ? t.slice(1) : t;
    return (
      <button key={i} aria-label={n} className={"flex h-6 shrink-0 items-center justify-center " + cell}>
        <Ic n={n} className={"size-5 " + (dim ? DIM : "")} />
      </button>
    );
  });
}

function Grip() {
  return <span className="mx-1 h-[26px] w-1 shrink-0 border-l-2 border-dotted border-[#999]" />;
}

function Logo() {
  return (
    <div className="flex h-[31px] w-[145px] shrink-0 items-center border-x border-[#999] bg-linear-to-br from-white from-55% to-[#d4d4d4] pl-1">
      <svg viewBox="0 0 28 28" className="size-7 shrink-0" aria-hidden="true">
        <g fill="none" stroke="#cf2f2a" strokeWidth="1.800" strokeLinejoin="round">
          <path d="M9 2.500C13 1 19 1 19 3.500C19 6 14 9 10 10.500" />
          <path d="M7 12.500C13 9.500 17 12.500 14 18C11 23 5 26 2.500 25.500C1.500 25 7 20 9.500 14" />
          <path d="M27 11.500C21 9.500 17.500 13 20.500 16C24 19 27 21 23.500 24C21 25.500 18 25.500 15.500 25.500" strokeWidth="2.400" />
        </g>
      </svg>
      <span className="ml-1.5 pt-1.5 text-[16px] leading-4 text-[#cf2f2a] italic"><b className="font-extrabold">SOLID</b>WORKS</span>
    </div>
  );
}

function TitleBar() {
  return (
    <div className="flex h-8 border-b border-[#808080] bg-[#f7f7f7] pl-[10px]">
      <Logo />
      <nav className="flex h-8 w-[359px] shrink-0 items-center gap-[14px] border-r-2 border-b border-r-[#999] border-b-black pl-7">
        {["File", "Edit", "View", "Insert", "Tools", "Window", "Help"].map((m) => <button key={m}>{m}</button>)}
        <button aria-label="Pin menu" className="ml-2"><Ic n="pin" className="size-4" /></button>
      </nav>
      <div className="flex shrink-0 items-center pl-[14px]">
        <ToolRow items={["newDoc", "^", "open", "^", "save", "^", "print", "^", "undo", "^"]} cell="w-6" caret="w-[15px]" />
        <span className="flex h-[26px] border border-[#5d8fae]">
          <button aria-label="Select" className="flex w-6 items-center justify-center border-r border-[#5d8fae] bg-[#b0b0b0]"><Ic n="cursor" /></button>
          <button aria-label="Select options" className="flex w-[13px] items-center justify-center"><Caret /></button>
        </span>
        <ToolRow items={["traffic", "list", "gear", "^"]} cell="w-[25px]" caret="w-4" />
      </div>
      <div className="flex-1 self-center text-center">Assem1 *</div>
      <div className="flex h-[23px] w-[202px] shrink-0 items-center self-center border border-[#bbb] bg-[#f7f7f7] px-1">
        <svg viewBox="0 0 14 16" className="ml-px h-4 w-[14px]" aria-hidden="true"><rect width="14" height="16" fill="#222" /><path d="M3 3L8 8L3 13M7 13H12" stroke="#fff" strokeWidth="1.500" fill="none" /></svg>
        <input aria-label="Search Commands" placeholder="Search Commands" className="ml-1 h-[19px] w-[140px] bg-[#ebedf0] px-0.5 placeholder:text-[#666]" />
        <svg viewBox="0 0 20 20" className="ml-1 size-[19px]" aria-hidden="true"><circle cx="9" cy="8" r="6.500" fill="none" stroke="#777" strokeWidth="1.800" /><path d="M13.500 13L18 18" stroke="#777" strokeWidth="2.500" /></svg>
        <Caret className="ml-2" />
      </div>
      <button aria-label="Help" className="ml-[5px] w-6 text-[18px] font-bold text-[#666]">?</button>
      <button aria-label="Help options" className="flex w-3 items-center justify-center"><Caret /></button>
      <button aria-label="Minimize" className="ml-0.5 flex w-[26px] items-center justify-center opacity-70"><Ic n="min" /></button>
      <button aria-label="Maximize" className="flex w-[26px] items-center justify-center opacity-70"><Ic n="max" /></button>
      <button aria-label="Close" className="flex w-[26px] items-center justify-center opacity-70"><Ic n="close" /></button>
    </div>
  );
}

function ViewBar() {
  return (
    <div className="flex h-8 border-b border-[#808080] bg-[#f7f7f7]">
      <div className="flex w-[414px] items-center border-r border-[#808080] pb-px">
        <Grip />
        <span className="w-px" />
        <ToolRow items={["zoomFit", "-zoomGrey", "prev", "|", "-annot", "cutaway", "orient", "^", "display", "^", "eye", "^", "ballEdit", "scene", "monitor", "^", "cubeLine"]} cell="w-[27px]" caret="w-[15px]" />
      </div>
      <div className="flex w-[335px] items-center border-r border-[#808080] pb-px">
        <Grip />
        <span className="w-px" />
        <ToolRow items={["normal", "|", "cFront", "cBack", "cLeft", "cRight", "cTop", "cBottom", "iso", "tri", "dim", "|", "flash"]} cell="w-[27px]" caret="w-[15px]" />
      </div>
    </div>
  );
}

const RIBBON = [
  ["editComp", ["Edit", "Component"], "w-[76px]"],
  ["insert", ["Insert", "Components"], "w-[72px]", "^"],
  ["mate", ["Mate"], "w-10"],
  ["preview", ["Component", "Preview", "Window"], "w-[66px]"],
  ["pattern", ["Linear Component", "Pattern"], "w-[110px]", "^"],
  ["smart", ["Smart", "Fasteners"], "w-[54px]"],
  ["move", ["Move", "Component"], "w-[76px] border-r", "^"],
  ["hidden", ["Show", "Hidden", "Components"], "w-[79px] border-r", "dim"],
  ["feat", ["Assembly", "Features"], "w-[58px]", "^"],
  ["refgeo", ["Reference", "Geometry"], "w-[63px] border-r", "^"],
  ["motion", ["New", "Motion", "Study"], "w-[51px] border-r"],
  ["bom", ["Bill of", "Materials"], "w-[60px] border-r"],
  ["exploded", ["Exploded", "View"], "w-[60px]"],
  ["exploded", ["Explode", "Line", "Sketch"], "w-[52px] border-r", "dim"],
  ["instant", ["Instant3D"], "mx-px w-[60px] border border-[#5d8fae] bg-[#b0b0b0]"],
  ["speedpak", ["Update", "Speedpak"], "w-[65px] border-x"],
  ["camera", ["Take", "Snapshot"], "w-[60px]"],
];

function Ribbon() {
  return (
    <div className="flex h-[82px] border-b border-[#808080] bg-[#f7f7f7] pt-px pb-0.5">
      {RIBBON.map(([n, lines, cls, mode], i) => (
        <button key={i} className={"flex shrink-0 flex-col items-center border-[#bbb] leading-[13px] whitespace-nowrap " + cls + (mode === "^" ? " pt-[3px]" : " pt-[10px]")}>
          <Ic n={n} className={"mb-0.5 size-5 " + (mode === "dim" ? DIM : "")} />
          {lines.map((l) => <span key={l} className={mode === "dim" ? "text-[#b4b4b4]" : ""}>{l}</span>)}
          {mode === "^" && <Caret className="mt-auto mb-[10px]" />}
        </button>
      ))}
    </div>
  );
}

function Column({ items, className, widthIcon }) {
  return (
    <div className={"shrink-0 border-[#808080] " + className}>
      <div className="h-[13px] px-1 pt-0.5"><div className="border-t-2 border-dotted border-[#999]" /></div>
      {items.map((t, i) => {
        if (t === "|") return <div key={i} className="flex h-2 items-center px-[5px]"><div className="h-px w-full bg-[#888]" /></div>;
        const caret = t.endsWith("^");
        const dim = t.startsWith("-");
        const on = t.startsWith("*");
        const n = t.replace(/[-^*]/g, "");
        return (
          <div key={i} className="flex h-[26px] items-center">
            <button aria-label={n} className={"flex h-[26px] items-center justify-center " + widthIcon + (on ? " border border-[#5d8fae] bg-[#b8babc]" : "")}>
              <Ic n={n} className={"size-[19px] " + (dim ? DIM : "")} />
            </button>
            {caret && <Caret className="ml-px" />}
          </div>
        );
      })}
    </div>
  );
}

const COL1 = ["-cFront", "-cBack", "-cLeft", "-cRight", "-cBottom", "-cTop", "-chamfer", "|", "-sketch", "-wrench", "-swap", "|", "-extrude", "-shellBox"];
const COL2 = ["dimension^", "-dimension", "|", "spell", "brush", "|", "bigA", "-sixA^", "balloon", "-balloonAuto", "finish", "weld", "tol", "datum", "target", "-hole", "-warn", "-hatch", "block^", "-center", "-cline", "table^"];
const COL3 = ["insert^", "mate", "pattern^", "smart", "move^", "|", "-hidden", "|", "feat^", "refgeo^", "|", "motion", "|", "bom", "|", "exploded", "-exploded", "|", "interf", "clear", "align", "-visual", "perf", "*instant"];

const TREE = [
  ["", "asm", "Assem1  (Default<Default_Display State-1>)", 0],
  [">", "history", "History", 1],
  ["", "sensor", "Sensors", 1],
  [">", "annoFolder", "Annotations", 1],
  ["", "plane", "Front Plane", 1],
  ["", "plane", "Top Plane", 1],
  ["", "plane", "Right Plane", 1],
  ["", "origin", "Origin", 1],
  [">", "part", "(f) lab t<1> (Default<<Default>_Display State 1>)", 1, true],
  [">", "part", "(-) lab s<2> (Default<<Default>_Display State 1>)", 1],
  [">", "part", "lab s<3> (Default<<Default>_Display State 1>)", 1],
  ["v", "mates", "Mates", 1],
  ["", "coincident", "Coincident11 (lab t<1>,lab s<2>)", 2],
  ["", "perp", "Perpendicular3 (lab t<1>,lab s<2>)", 2],
  ["", "coincident", "Coincident14 (lab t<1>,lab s<3>)", 2],
  ["", "perp", "Perpendicular4 (lab t<1>,lab s<3>)", 2],
  ["", "coincident", "Coincident16 (lab t<1>,lab s<3>)", 2],
];

function Expander({ s }) {
  return (
    <span className="flex w-[22px] shrink-0 items-center pl-1.5">
      {s && <svg viewBox="0 0 8 8" className="size-2" aria-hidden="true"><path d={s === ">" ? "M1 0L6 4L1 8Z" : "M0 1H8L4 6Z"} fill="#555" /></svg>}
    </span>
  );
}

function Tree() {
  return (
    <div className="mr-0.5 flex min-w-0 flex-1 flex-col overflow-hidden pl-px">
      <div className="mt-0.5 border-t border-[#bbb]" />
      <div className="mt-[14px] flex h-[30px] border-t border-[#999]">
        <button aria-label="Feature tree" className="flex w-10 items-center justify-center"><Ic n="asm" className="size-[18px]" /></button>
        <button aria-label="Property manager" className="mt-1 flex w-10 items-center justify-center border border-[#808080] bg-[#d4d4d4]"><Ic n="list" className="size-4" /></button>
      </div>
      <div className="ml-0.5 flex h-[26px] shrink-0 items-center border border-[#bbb] px-0.5">
        <Ic n="filter" className="size-[18px]" /><Caret />
      </div>
      <ul className="mt-0.5 shrink-0 whitespace-pre">
        {TREE.map(([s, n, label, depth, sel], i) => (
          <li key={i} className="flex h-[22px] items-center">
            {depth > 0 && <Expander s={s} />}
            <span className={"flex h-[22px] min-w-0 flex-1 items-center gap-[5px] " + (depth === 0 ? "pl-[3px]" : depth === 2 ? "pl-[26px]" : sel ? "border border-[#4d86a8] bg-[#a6c8e2] pl-0.5" : "pl-[3px]")}>
              <Ic n={n} className="size-[18px]" />
              <span className="min-w-0 flex-1 overflow-hidden">{label}</span>
            </span>
          </li>
        ))}
      </ul>
      <div className="h-[3px] shrink-0 border-b border-[#1c3f94] bg-[#3a6fc0]" />
      <div className="mt-auto mb-0.5 flex h-[15px] items-center bg-[#efefef]">
        <button aria-label="Scroll left" className="flex w-4 justify-center"><svg viewBox="0 0 8 8" className="size-2" aria-hidden="true"><path d="M6 0L2 4L6 8" fill="none" stroke="#444" strokeWidth="2" /></svg></button>
        <div className="flex h-[15px] flex-1"><div className="w-[79%] bg-[#cdcdcd]" /></div>
        <button aria-label="Scroll right" className="flex w-4 justify-center"><svg viewBox="0 0 8 8" className="size-2" aria-hidden="true"><path d="M2 0L6 4L2 8" fill="none" stroke="#444" strokeWidth="2" /></svg></button>
      </div>
    </div>
  );
}

const TABS = [["Layout", "w-14"], ["Sketch", "w-14"], ["Evaluate", "w-[60px]"], ["SOLIDWORKS Add-Ins", "w-[132px]"]];

function LeftPanel() {
  return (
    <div className="flex w-[372px] shrink-0 flex-col border-r border-[#808080] bg-[#f7f7f7]">
      <div className="flex h-[22px] shrink-0">
        <button className="w-[68px] font-bold text-[#333]">Assembly</button>
        {TABS.map(([t, w]) => <button key={t} className={"shrink-0 border-b border-l border-[#808080] bg-[#d4d4d4] whitespace-nowrap text-[#333] " + w}>{t}</button>)}
      </div>
      <div className="flex min-h-0 flex-1 items-start">
        <Column items={COL1} widthIcon="w-[33px]" className="w-[34px] border-r border-b pb-[7px]" />
        <Column items={COL2} widthIcon="w-[33px]" className="-ml-px w-[50px] border border-t-0 pb-[7px]" />
        <Column items={COL3} widthIcon="ml-0.5 w-[27px]" className="w-[46px] border-b pb-[7px]" />
        <div className="flex min-w-0 flex-1 self-stretch"><Tree /></div>
      </div>
    </div>
  );
}

function shift(pts, x, y) {
  return pts.map(([a, b]) => `${a + x},${b + y}`).join(" ");
}

function Teeth({ x, y, clear }) {
  return [0, 1, 2, 3, 4].map((i) => {
    const ox = x + i * 20;
    const oy = y + i * 36;
    const blue = i < clear;
    const s = blue ? "#0b3a6e" : "#0c1014";
    return (
      <g key={i} stroke={s} strokeWidth="1.300" strokeLinejoin="round">
        {i < 4 && <polygon points={shift([[13, 24], [21, 22], [30, 36], [22, 38]], ox, oy)} fill={blue ? "#4079b2" : "#6f7f90"} />}
        <polygon points={shift([[0, 2], [2, 0], [10, 0], [12, 3], [22, 19], [22, 23], [20, 25], [12, 26], [10, 22]], ox, oy)} fill={blue ? "#3a73ad" : "#5c6b7b"} />
        <polygon points={shift([[3, 6], [10, 4], [17, 17], [12, 19]], ox, oy)} fill={blue ? "#4a82bb" : "#8494a5"} strokeWidth="1" />
        <polyline points={shift([[0, 2], [11, 20], [22, 19]], ox, oy)} fill="none" />
        <polyline points={shift([[11, 20], [12, 26]], ox, oy)} fill="none" />
      </g>
    );
  });
}

function Model() {
  return (
    <svg viewBox="380 167 1532 830" className="absolute inset-0 size-full" role="img" aria-label="Table assembly with the top selected">
      <g strokeLinejoin="round">
        <polygon points="1200,300 1290,460 1299,462 1327,833 1316,835 1227,673" fill="#8a8a8a" />
        <polygon points="1288,460 1299,460 1327,833 1316,835" fill="#7c7c7c" />
        <polygon points="652,440 660,440 742,578 752,576 779,947 770,949 680,787" fill="#8a8a8a" />
        <polygon points="741,578 752,576 779,947 770,949" fill="#7c7c7c" />
        <polyline points="652,442 680,787 770,949 779,947 752,576" fill="none" stroke="#000" strokeWidth="1.500" />
        <path d="M741 578L770 949" stroke="#000" strokeWidth="1.500" />
        <path d="M665 462L690 785L779 947M680 787L690 785" fill="none" stroke="#444" strokeWidth="1.200" />
        <path d="M1212 470L1227 673L1316 835L1327 833L1299 462M1288 462L1316 835" fill="none" stroke="#000" strokeWidth="1.500" />
        <path d="M1222 478L1237 671L1327 833M1227 673L1237 671" fill="none" stroke="#444" strokeWidth="1.200" />

        <polygon points="631,392 632,402 732,582 732,573" fill="#9a9a9a" stroke="#000" strokeWidth="1.500" />
        <polygon points="732,573 1312,451 1313,461 732,582" fill="#858585" stroke="#000" strokeWidth="1.500" />
        <polygon points="631,392 1213,271 1312,451 732,573" fill="#4a83bd" />
        <polygon points="631,392 1213,271 1213,281 638,401" fill="#3c74b0" />
        <polygon points="1199,297 1290,456 1212,471" fill="#336da6" />
        <polygon points="1199,297 1210,316 1222,469 1212,471" fill="#3b75af" />
        <path d="M638 401L1213 281M1199 297L1212 471M1210 316L1222 469" fill="none" stroke="#0b3a6e" strokeWidth="1.400" />
        <path d="M664 430L665 448" stroke="#0b3a6e" />
        <path d="M1212 471L1213 482M1222 469L1223 480M741 571L742 580M751 569L752 578M1288 456L1289 466M1299 454L1300 464" stroke="#222" strokeWidth="1.200" />
        <path d="M637 399L737 569L1309 449L1214 279" fill="none" stroke="#2a62a0" strokeWidth="1.200" />
        <path d="M631 392L1213 271L1312 451L732 573Z" fill="none" stroke="#2a66a6" strokeWidth="2" />
        <path d="M631 392L1213 271" fill="none" stroke="#6fa6dc" strokeWidth="1" strokeDasharray="2 2" />
        <path d="M1213 271L1312 451L732 573L631 392" fill="none" stroke="#e6f1fb" strokeWidth="1" strokeDasharray="2 2" />
        <path d="M633 397L734 570L1309 449L1213 276" fill="none" stroke="#b9d5ef" strokeWidth="1" strokeDasharray="2 2" />
        <Teeth x={650} y={404} clear={1} />
        <Teeth x={1197} y={290} clear={3} />
        <path d="M1070 387V397M1065 392H1075" stroke="#7ab8f5" />
      </g>
      <g>
        <path d="M420 939L413 926" stroke="#12128f" strokeWidth="4" />
        <path d="M409 924L418 924L416 932L410 931Z" fill="#1a1aa0" />
        <path d="M420 940V922" stroke="#145c22" strokeWidth="3" />
        <path d="M418 913L423 926H414Z" fill="#1f8a35" />
        <path d="M420 939L401 943" stroke="#c4181c" strokeWidth="3.500" />
        <path d="M391 945L402 938L404 947Z" fill="#d01f24" />
        <text x="414" y="912" fontSize="11" fontFamily="Liberation Sans" fill="#1a7f2d">Y</text>
        <text x="405" y="924" fontSize="11" fontFamily="Liberation Sans" fill="#1717a0">Z</text>
        <text x="385" y="949" fontSize="11" fontFamily="Liberation Sans" fill="#c4181c">X</text>
      </g>
    </svg>
  );
}

function Turn({ d }) {
  return <svg viewBox="0 0 13 13" className="size-[13px] shrink-0" aria-hidden="true"><path d={d} fill="#f2f2f2" stroke="#777" /></svg>;
}

function Crumb({ children }) {
  return <li className="flex h-[23px] items-center">{children}</li>;
}

function Chevron({ last }) {
  return (
    <svg viewBox="0 0 12 23" className="h-[23px] w-3 shrink-0" aria-hidden="true">
      {last && <path d="M0 0H12V23H0L11 11.500Z" fill="#c8dded" />}
      <path d="M0 0L11 11.500L0 23" fill="none" stroke="#bbb" />
    </svg>
  );
}

function Breadcrumbs() {
  return (
    <div className="absolute top-[17px] left-0">
      <div className="flex items-center gap-0.5 pl-[72px]">
        <Turn d="M1.500 12.500V3.500H6.500V0.500L11.500 5.500L6.500 10.500V7.500H5.500V12.500Z" />
        <span />
        {["coincident", "perp", "coincident", "perp", "coincident"].map((n, i) => (
          <button key={i} aria-label={n} className="flex size-[23px] items-center justify-center border border-[#ccc] bg-white"><Ic n={n} className="size-[18px] opacity-65" /></button>
        ))}
      </div>
      <ul className="mt-[6px] flex w-[263px] items-center border border-l-0 border-[#ccc] bg-[#fafafa]">
        <Crumb><Ic n="asm" className="ml-[27px] size-[18px] opacity-70" /></Crumb>
        <Chevron />
        <Crumb><Ic n="part" className="mx-px size-[18px] opacity-70" /></Crumb>
        <Chevron />
        <Crumb><Ic n="iso" className="mx-px size-[18px] opacity-70" /></Crumb>
        <Chevron />
        <Crumb><Ic n="extrude" className="mr-1.5 ml-px size-[18px] opacity-80" /><span className="w-[74px] text-[11px] whitespace-nowrap">Boss-Extrude1</span></Crumb>
        <Chevron last />
        <li className="flex h-[23px] flex-1 items-center bg-[#c8dded]"><Ic n="face" className="size-[18px]" /></li>
      </ul>
      <div className="mt-[5px] flex items-center pl-[175px]">
        <Turn d="M1.500 0.500V9.500H6.500V12.500L11.500 7.500L6.500 2.500V5.500H5.500V0.500Z" />
        <button className="ml-1 flex h-6 items-center gap-1 border border-[#ccc] bg-[#fafafa] px-0.5 text-[11px]"><Ic n="sketch" className="size-5 opacity-70" />Sketch1</button>
      </div>
    </div>
  );
}

function Viewport() {
  return (
    <div className="relative min-w-0 flex-1 bg-white">
      <Model />
      <div className="relative mr-1.5 flex h-[30px] items-center justify-center opacity-70">
        <ToolRow items={["zoomFit", "zoomArea", "prev", "cutaway", "orient", "^", "display", "^", "eye", "^", "ballEdit", "scene", "^", "monitor", "^"]} cell="w-[26px]" caret="w-[14px]" />
      </div>
      <div className="absolute top-[3px] right-[7px] flex opacity-60">
        {["paneL", "paneR", "min", "restore", "close"].map((n) => <button key={n} aria-label={n} className="flex h-6 w-[26px] items-center justify-center"><Ic n={n} /></button>)}
      </div>
      <Breadcrumbs />
      <div className="absolute top-11 right-0 flex w-[26px] flex-col border border-r-0 border-[#808080]">
        {["home", "books", "folderOpen", "palette", "ball", "props", "forum"].map((n, i) => (
          <button key={n} aria-label={n} className={"flex h-6 items-center justify-center " + (i ? "border-t border-[#808080] bg-[#d4d4d4]" : "bg-white")}><Ic n={n} className="size-[18px]" /></button>
        ))}
      </div>
      <button aria-label="Collapse panel" className="absolute top-[395px] -left-px flex h-[39px] w-2 items-center justify-center border border-l-0 border-[#808080] bg-[#f7f7f7]"><span className="size-1.5 rounded-full border border-[#999] bg-[#ccc]" /></button>
    </div>
  );
}

function MatesPopup() {
  return (
    <section className="absolute top-[195px] left-[191px] h-[179px] w-[218px] bg-[#f7f7f7] shadow-[0_2px_10px_rgba(0,0,0,0.400)]">
      <header className="flex h-[30px] items-center justify-between bg-white pr-px pl-[7px] text-[#999]">
        (f) lab t-1
        <button aria-label="Close" className="mt-1 size-[19px] bg-[#e0e0e0] leading-4 text-[#f4f4f4]">×</button>
      </header>
      <ul className="pt-px">
        {TREE.slice(12).map(([, n, label]) => (
          <li key={label} className="flex h-[22px] items-center gap-[5px] pl-[3px] whitespace-nowrap"><Ic n={n} className="size-[18px]" />{label}</li>
        ))}
      </ul>
    </section>
  );
}

function BottomBars() {
  const sep = <span className="h-4 w-px bg-[#ccc]" />;
  return (
    <>
      <div className="flex h-4 shrink-0 border-b border-[#808080] bg-[#f7f7f7]">
        <div className="ml-[130px] w-[27px] border-l-2 border-[#9ab5b8]" />
        <div className="flex w-[65px] border-t border-[#333] bg-[#b4b4b4]">
          {["M3 1V9M10 0L5 5L10 10Z", "M9 0L4 5L9 10Z", "M4 0L9 5L4 10Z", "M10 1V9M3 0L8 5L3 10Z"].map((d) => (
            <button key={d} aria-label="Scroll tabs" className="flex flex-1 items-center justify-center border border-[#999]"><svg viewBox="0 0 13 10" className="h-[10px] w-[13px]" aria-hidden="true"><path d={d} fill="#888" stroke="#888" /></svg></button>
          ))}
        </div>
        <button className="w-[58px] leading-[12px] font-bold">Model</button>
        <button className="w-[109px] border-x border-t border-[#808080] bg-[#d4d4d4] pr-3 leading-[10px]">Motion Study 1</button>
        <div className="flex-1 border-t border-[#808080]" />
      </div>
      <footer className="flex h-[18px] shrink-0 items-center bg-[#f7f7f7] pt-px pl-px text-[11px] whitespace-nowrap">
        <span className="flex-1">SOLIDWORKS Premium 2016 x64 Edition</span>
        <span className="w-[82px]">Under Defined</span>
        {sep}<span className="w-[7px]" />{sep}
        <span className="w-[100px] pl-[3px]">Editing Assembly</span>
        {sep}<span className="w-[15px]" />{sep}
        <button className="ml-[31px] flex w-[62px] items-center justify-between">MMGS<svg viewBox="0 0 7 4" className="h-1 w-[7px]" aria-hidden="true"><path d="M0 4H7L3.500 0Z" fill="#444" /></svg></button>
        <svg viewBox="0 0 18 14" className="ml-[64px] h-[14px] w-[18px]" aria-hidden="true"><path d="M1 3L7 1L17 6V9L11 13L2 8ZM1 3L11 9L17 6M11 9V13" fill="#ddd" stroke="#444" /><circle cx="6" cy="4" r="2" fill="#fff" stroke="#444" /></svg>
        <svg viewBox="0 0 10 10" className="ml-2.5 size-[10px] self-end" aria-hidden="true"><path d="M8 0h2v2h-2zM4 4h2v2h-2zM8 4h2v2h-2zM0 8h2v2h-2zM4 8h2v2h-2zM8 8h2v2h-2z" fill="#bbb" /></svg>
      </footer>
    </>
  );
}

const APPS = [
  ["Task View", <g fill="none" stroke="#fff" strokeWidth="1.300"><path d="M9 5H19V23H9ZM7 7H4V21H7M21 7H24V21H21" /></g>, 0],
  ["File Explorer", <><path d="M3 4H10L12 6H25V24H3Z" fill="#f6d776" /><path d="M8 24V14H20V24H17V19H11V24Z" fill="#38b6e8" /></>, 1],
  ["Chrome", <><circle cx="14" cy="14" r="11" fill="#e8b92c" /><path d="M14 14L4.500 8.500A11 11 0 0 1 23.500 8.500H14Z" fill="#d9402f" /><path d="M14 14L4.500 8.500A11 11 0 0 0 13 25L18 17Z" fill="#3a9d4b" /><circle cx="14" cy="14" r="5.500" fill="#fff" /><circle cx="14" cy="14" r="4.300" fill="#3d7de0" /></>, 1],
  ["Viewer", <><path d="M5 8L12 6L12 15L11 24Z" fill="#1f3a78" /><path d="M12 8L22 3L13 24Z" fill="#34569c" /></>, 1],
  ["Simulation", <><rect x="3" y="3" width="22" height="22" rx="2" fill="#b9bdc4" /><path d="M5 18L10 6L16 9L24 7L20 22L11 21Z" fill="#f5ee31" stroke="#1414b8" strokeWidth="2.500" /><path d="M5 9L22 21M7 21L13 5M18 4L22 12" stroke="#1414b8" strokeWidth="2" /></>, 0],
  ["eDrawings 2016", <><text x="9" y="17" fontSize="25" fontWeight="bold" fontFamily="Open Sans" fill="#b8d23a">e</text><path d="M1 9H7M9 2V18" stroke="#b8d23a" strokeWidth="1.500" /><text x="8" y="27" fontSize="8" fontWeight="bold" fontFamily="Open Sans" fill="#fff">2016</text></>, 0],
  ["Snipping Tool", <><ellipse cx="12" cy="10" rx="8" ry="7" fill="#e9e9e9" stroke="#c33" strokeWidth="1.500" /><path d="M10 8L20 20M16 8L15 20" stroke="#aaa" strokeWidth="2" /><circle cx="14" cy="22" r="3" fill="none" stroke="#3a8bc8" strokeWidth="1.800" /><circle cx="21" cy="20" r="3" fill="none" stroke="#3a8bc8" strokeWidth="1.800" /></>, 1],
  ["Skype", <><rect x="2" y="1" width="20" height="21" rx="9" fill="#17a9e8" /><text x="6" y="18" fontSize="17" fontWeight="bold" fontFamily="Open Sans" fill="#fff">S</text><circle cx="20" cy="20" r="7" fill="#1479b8" /><path d="M16.500 19A4 4 0 0 1 23 18M23.500 21A4 4 0 0 1 17 22M23 15V18H20M17 25V22H20" fill="none" stroke="#fff" strokeWidth="1.300" /></>, 1],
  ["OneDrive folder", <><path d="M3 3H10L14 5V24H3Z" fill="#f6d776" /><path d="M11 25A4 4 0 0 1 12 17A5 5 0 0 1 21 17A4 4 0 0 1 24 25Z" fill="#1d6fc4" stroke="#fff" /></>, 1],
  ["Paint", <><ellipse cx="12" cy="16" rx="11" ry="9" fill="#cfdde8" /><circle cx="7" cy="14" r="2" fill="#c33" /><circle cx="12" cy="11" r="2" fill="#393" /><circle cx="7" cy="19" r="2" fill="#36c" /><path d="M16 24L24 3" stroke="#d58a35" strokeWidth="3" /><path d="M21 7L24 1L27 4Z" fill="#ecc08c" /></>, 1],
  ["SOLIDWORKS 2016", <><path d="M2 7L9 2H26V19L20 25H2Z" fill="#a01318" /><path d="M2 7H20V25H2Z" fill="#d3242a" /><text x="4" y="17" fontSize="12" fontWeight="bold" fontFamily="Open Sans" fill="#fff">SW</text><text x="8" y="26" fontSize="8" fontWeight="bold" fontFamily="Open Sans" fill="#fff">2016</text></>, 2],
  ["Kaspersky", <><path d="M2 2H9V25H2Z" fill="#e6e6e6" /><path d="M9 13L20 1H26L15 14L9 25H2V18Z" fill="#d8232a" /><path d="M13 14L20 19L22 16L25 25L15 25L18 22L12 17Z" fill="#ccc" stroke="#555" /></>, 1],
];

function Taskbar() {
  return (
    <div className="flex h-10 shrink-0 bg-[#0d0c0c] text-white">
      <button aria-label="Start" className="flex w-12 items-center justify-center"><svg viewBox="0 0 16 16" className="size-4" aria-hidden="true"><path d="M0 2.300L6.500 1.400V7.600H0ZM7.300 1.300L16 0V7.600H7.300ZM0 8.400H6.500V14.600L0 13.700ZM7.300 8.400H16V16L7.300 14.700Z" fill="#fff" /></svg></button>
      <input aria-label="Search Windows" placeholder="Search Windows" className="w-[344px] bg-[#333] px-3 text-[14px] placeholder:text-[#999]" />
      {APPS.map(([name, art, state]) => (
        <button key={name} aria-label={name} className={"flex w-[49px] flex-col items-center " + (state === 2 ? "bg-[#3c3c3c]" : "")}>
          <span className="flex flex-1 items-center"><svg viewBox="0 0 28 28" className="size-[26px]" aria-hidden="true">{art}</svg></span>
          <span className={"h-0.5 " + (state === 2 ? "w-full bg-[#76b9ed]" : state ? "w-10 bg-[#76b9ed]" : "w-10")} />
        </button>
      ))}
      <div className="ml-auto flex items-center">
        <button aria-label="Show hidden icons"><svg viewBox="0 0 12 8" className="h-2 w-3" aria-hidden="true"><path d="M1 7L6 2L11 7" fill="none" stroke="#fff" strokeWidth="1.300" /></svg></button>
        <svg viewBox="0 0 16 16" className="ml-[10px] size-4" aria-hidden="true"><path d="M5 9A11 11 0 0 1 15 3M8 11A8 8 0 0 1 15 7M11 14A5 5 0 0 1 15 11" fill="none" stroke="#ccc" strokeWidth="1.500" /><circle cx="14" cy="14" r="1.500" fill="#fff" /><path d="M5 5L10 15H0Z" fill="#f3c52c" /><path d="M5 8V12M5 13V14" stroke="#000" strokeWidth="1.200" /></svg>
        <svg viewBox="0 0 18 16" className="ml-2 h-4 w-[18px]" aria-hidden="true"><path d="M1 5H4L8 1V14L4 10H1Z" fill="none" stroke="#fff" strokeWidth="1.200" /><circle cx="13" cy="11" r="5" fill="#d02a2a" /><path d="M11 9L15 13M15 9L11 13" stroke="#fff" strokeWidth="1.200" /></svg>
        <svg viewBox="0 0 16 16" className="ml-[6px] size-4" aria-hidden="true"><path d="M0 0H16V12H10L8 16L6 12H0Z" fill="#fff" /><path d="M3 3.500H13M3 6H13M3 8.500H9" stroke="#111" /></svg>
        <div className="ml-3 w-[54px] text-center text-[11px] leading-[17px] whitespace-nowrap"><div>11:49 AM</div><div>6/14/2017</div></div>
        <div className="ml-[7px] h-10 w-[6px] border-l border-[#666]" />
      </div>
    </div>
  );
}

function Behind() {
  return (
    <div className="absolute inset-0 flex flex-col bg-[#e9e9e9] text-[#777]">
      <div className="flex h-6 items-start bg-linear-to-b from-white to-[#ccc] pt-1 pl-0.5">
        <span className="h-4 w-3 border border-[#d9b84e] bg-[#f6dc8a]" />
        <span className="ml-2 h-3 w-px bg-[#999]" />
        <span className="ml-3 h-4 w-3 border border-[#888] bg-white" />
        <span className="ml-[10px] h-4 w-3 border border-[#d9b84e] bg-[#f6dc8a]" />
        <span className="mt-1.5 ml-2 h-px w-2 bg-black" />
        <span className="ml-2 h-3 w-px bg-[#999]" />
        <span className="ml-2 text-[12px] leading-4">parts ofcupboad</span>
        <span className="mr-5 ml-auto flex gap-[36px]">
          <span className="mt-1.5 h-px w-[10px] bg-[#888]" />
          <span className="h-3 w-2 border border-[#888]" />
          <svg viewBox="0 0 10 10" className="size-[10px]" aria-hidden="true"><path d="M0 0L10 10M10 0L0 10" stroke="#888" /></svg>
        </span>
      </div>
      <div className="flex h-[22px] justify-between"><span className="w-2 bg-[#1a73c4]" /><span className="mr-px w-1.5 rounded-full bg-[#1a5f9c]" /></div>
      <div className="mt-auto flex h-4 gap-6 pl-[14px] leading-[10px] text-[#333]"><span>37 items</span><span>1 item selected&nbsp; 65.8 KB</span></div>
    </div>
  );
}

export default function App() {
  return (
    <div className="flex h-screen w-full flex-col overflow-hidden font-[Open_Sans,Noto_Sans,sans-serif] text-xs text-[#111]">
      <main className="relative min-h-0 flex-1">
        <Behind />
        <div className="absolute top-[13px] right-[7px] bottom-2 left-[7px] flex flex-col border border-black bg-white pt-[7px] shadow-[0_0_12px_rgba(0,0,0,0.350)]">
          <TitleBar />
          <ViewBar />
          <Ribbon />
          <div className="flex min-h-0 flex-1">
            <LeftPanel />
            <Viewport />
          </div>
          <BottomBars />
        </div>
        <MatesPopup />
      </main>
      <Taskbar />
    </div>
  );
}
